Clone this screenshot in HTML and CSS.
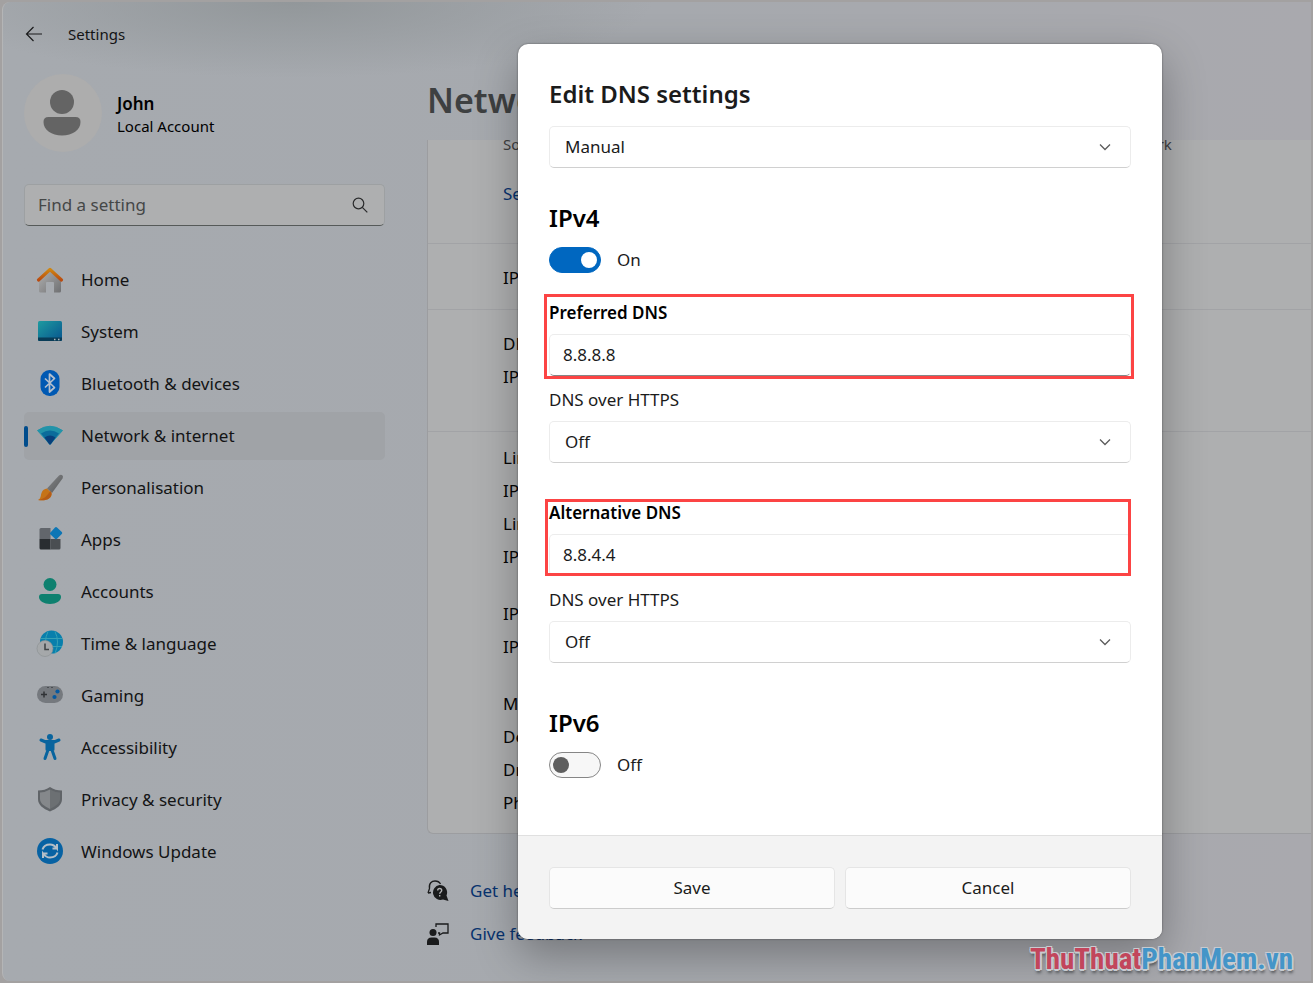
FILE: index.html
```html
<!DOCTYPE html>
<html lang="en">
<head>
  <meta charset="UTF-8">
  <meta name="viewport" content="width=device-width, initial-scale=1.0">
  <title>Settings</title>
  <link rel="stylesheet" href="styles.css">
</head>
<body>
  <div class="window">
    <header class="titlebar">
      <button class="back-button" aria-label="Back">
        <svg width="18" height="16" viewBox="0 0 18 16" fill="none" stroke="#1a1b1c" stroke-width="1.2"><path d="M17 8H1.5M8.500 1L1.500 8l7 7"/></svg>
      </button>
      <span class="app-name">Settings</span>
    </header>
    <div class="columns">
      <aside class="sidebar">
        <div class="account">
          <div class="avatar">
            <svg width="78" height="78" viewBox="0 0 78 78" fill="#646464"><circle cx="38" cy="28" r="12"/><path d="M24.500 43h27q5 0 5 5c0 8-8 13.500-18.500 13.500S19.500 56 19.500 48q0-5 5-5z"/></svg>
          </div>
          <div>
            <div class="account-name">John</div>
            <div class="account-type">Local Account</div>
          </div>
        </div>
        <label class="search">
          <input type="text" placeholder="Find a setting" aria-label="Find a setting">
          <svg width="16" height="16" viewBox="0 0 16 16" fill="none" stroke="#2a2b2c" stroke-width="1.200"><circle cx="6.500" cy="6.500" r="5.300"/><path d="M10.300 10.300l5 5"/></svg>
        </label>
        <nav class="menu">
          <a class="menu-item" href="#home">
            <svg viewBox="0 0 28 28"><defs><linearGradient id="wall" x2="1" y2="1"><stop stop-color="#b2b2b2"/><stop offset="1" stop-color="#6f7072"/></linearGradient><linearGradient id="roof" x2="0" y2="1"><stop stop-color="#cf8512"/><stop offset="1" stop-color="#b94b10"/></linearGradient></defs><path d="M3 12L14 3l11 9v13q0 1.500-1.500 1.500H18V17q0-1-1-1h-6q-1 0-1 1v9.500H4.500Q3 26.500 3 25z" fill="url(#wall)"/><path d="M2.500 14L14 3.500 25.500 14" fill="none" stroke="url(#roof)" stroke-width="3.200" stroke-linecap="round" stroke-linejoin="round"/></svg>
            Home
          </a>
          <a class="menu-item" href="#system">
            <svg viewBox="0 0 28 28"><defs><linearGradient id="screen" x2="1" y2="1"><stop stop-color="#1e9ba0"/><stop offset="1" stop-color="#07548e"/></linearGradient></defs><rect x="2" y="3" width="24" height="20" rx="1.500" fill="url(#screen)"/><path d="M2 19.500h24v2q0 1.500-1.500 1.500h-21Q2 23 2 21.500z" fill="#083c57"/><path d="M18 21.500h1.500m2.500 0h1.500" stroke="#b0b8bd" stroke-width="1.300"/></svg>
            System
          </a>
          <a class="menu-item" href="#bluetooth">
            <svg viewBox="0 0 28 28"><rect x="4.500" y="0" width="19" height="26" rx="9" fill="#0059b3"/><path d="M9 8.500l9.500 9-5 4.500V4l5 4.500-9.500 9" fill="none" stroke="#b5bfcc" stroke-width="1.700" stroke-linejoin="round"/></svg>
            Bluetooth &amp; devices
          </a>
          <a class="menu-item active" href="#network" aria-current="page">
            <svg viewBox="0 0 28 28"><path d="M1.500 8.500Q14 0 26.500 8.500L14 22.500z" fill="#2293a9" stroke="#2293a9" stroke-linejoin="round"/><path d="M5 11.500Q14 5.500 23 11.500L14 22.500z" fill="#0b6c9b"/><path d="M8.500 15.500Q14 11.500 19.500 15.500L15 22q-1 1-2 0z" fill="#083f7b"/></svg>
            Network &amp; internet
          </a>
          <a class="menu-item" href="#personalisation">
            <svg viewBox="0 0 28 28"><defs><linearGradient id="brush" x2="1" y2="1"><stop stop-color="#858789"/><stop offset="1" stop-color="#56585a"/></linearGradient></defs><path d="M23 1.500q2-1.500 3.500 0 1 1 0 3L16 19l-5-4.500z" fill="url(#brush)"/><path d="M11 14.500l4.500 4.500c1 5-5 8.500-13.500 7 3-1.500 2.500-4 3.500-7s3-4 5.500-4.500z" fill="#c57318"/><path d="M2 26c6-1 8-3 12.500-9l1 2c.5 5-5 8.500-13.500 7z" fill="#b55c16"/></svg>
            Personalisation
          </a>
          <a class="menu-item" href="#apps">
            <svg viewBox="0 0 28 28"><path d="M5 2h9.500v11H3.500V3.500Q3.500 2 5 2z" fill="#62666c"/><path d="M3.500 13h11v10.500H5q-1.500 0-1.500-1.500z" fill="#292d31"/><path d="M14.500 13h10v9q0 1.500-1.500 1.500h-8.500z" fill="#4a4e52"/><path d="M14 7l5-5.500q1-1 2 0L25.800 6q1 1 0 2L21 12.800q-1 1-2 0L14 8z" fill="#0d76b5"/></svg>
            Apps
          </a>
          <a class="menu-item" href="#accounts">
            <svg viewBox="0 0 28 28" fill="#0e806f"><circle cx="14" cy="6.500" r="6.500"/><path d="M6 16h16q3 0 3 3c0 4-5 7-11 7s-11-3-11-7q0-3 3-3z"/></svg>
            Accounts
          </a>
          <a class="menu-item" href="#time">
            <svg viewBox="0 0 28 28"><circle cx="15.500" cy="12" r="11.500" fill="#087fac"/><path d="M5 8.500h21M5 16.500h21M12 1.500q-5 10 0 22M19 1.500q5 10 0 22" fill="none" stroke="#35a0b5"/><circle cx="9" cy="18.500" r="8" fill="#a5a8aa" stroke="#8a8e91" stroke-width=".6"/><path d="M9 13.500v6h4" fill="none" stroke="#424649" stroke-width="1.600"/></svg>
            Time &amp; language
          </a>
          <a class="menu-item" href="#gaming">
            <svg viewBox="0 0 28 28"><rect x="1" y="4" width="26" height="17" rx="8.500" fill="#75797e"/><path d="M5 12.500h6M8 9.500v6" stroke="#303336" stroke-width="1.500"/><path d="M11 5.500h2m2 0h2" stroke="#4a4e52"/><circle cx="21.500" cy="9.500" r="2.100" fill="#0659a0"/><circle cx="18.500" cy="15" r="2.100" fill="#0659a0"/></svg>
            Gaming
          </a>
          <a class="menu-item" href="#accessibility">
            <svg viewBox="0 0 28 28"><circle cx="14" cy="3" r="3" fill="#08649e"/><path d="M5 6l6 2.500h6L23 6M11 9.500h6v6H11zM12.500 14.500L9 24.500M15.500 14.500L19 24.500" fill="#08649e" stroke="#08649e" stroke-width="3" stroke-linecap="round" stroke-linejoin="round"/></svg>
            Accessibility
          </a>
          <a class="menu-item" href="#privacy">
            <svg viewBox="0 0 28 28"><path d="M14 1q5 3.500 12 3.500V13c0 6-5 9.500-12 12.500C7 22.500 2 19 2 13V4.500Q9 4.500 14 1z" fill="#606468"/><path d="M14 3.500q4 2.500 10 3V13c0 4-4 7-10 10z" fill="#6c7073"/><path d="M14 3.500V23C8 20 4 17 4 13V6.500q6-.5 10-3z" fill="#85888b"/></svg>
            Privacy &amp; security
          </a>
          <a class="menu-item" href="#update">
            <svg viewBox="0 0 28 28"><circle cx="14" cy="13" r="13" fill="#0762a3"/><path d="M6.500 11.500Q8 6.500 14 6.500q4 0 7 4V6m0 4.500h-4.500M21.500 14.500Q20 19.500 14 19.500q-4 0-7-4V20m0-4.500h4.500" fill="none" stroke="#b3bec7" stroke-width="2"/></svg>
            Windows Update
          </a>
        </nav>
      </aside>
      <main class="content">
        <h1>Network</h1>
        <div class="panel">
          <section class="metered">
            <p>Some apps might work differently to reduce data usage when you're connected to this network</p>
            <a href="#limit">Set a data limit</a>
          </section>
          <section class="assignment">
            <div class="row">IP assignment:</div>
          </section>
          <section class="servers">
            <div class="row">DNS servers:</div>
            <div class="row">IPv4 DNS servers:</div>
          </section>
          <section class="details">
            <div>
              <div class="row">Link speed:</div>
              <div class="row">IPv6 address:</div>
              <div class="row">Link-local address:</div>
              <div class="row">IPv6 DNS servers:</div>
            </div>
            <div>
              <div class="row">IPv4 address:</div>
              <div class="row">IPv4 DNS servers:</div>
            </div>
            <div>
              <div class="row">Manufacturer:</div>
              <div class="row">Description:</div>
              <div class="row">Driver version:</div>
              <div class="row">Physical address:</div>
            </div>
          </section>
        </div>
        <div class="help">
          <a href="#help">
            <svg width="22" height="22" viewBox="0 0 22 22"><path d="M1 13l1.500-4.500C1.500 3 5 1 8 1c2.500 0 4.500 1 5.500 3M1 13l3-.5" fill="none" stroke="#1a1b1c" stroke-width="1.300"/><path d="M12.500 5a7.500 7.500 0 0 1 7 10.500L21.500 21 16 19.500A7.500 7.500 0 1 1 12.500 5z" fill="#1a1b1c"/><path d="M10.700 10.500q0-2 2-2t2 2c0 1.500-2 1.500-2 3.300m0 1.200v1.500" fill="none" stroke="#b0b1b2" stroke-width="1.400"/></svg>
            Get help
          </a>
          <a href="#feedback">
            <svg width="22" height="22" viewBox="0 0 22 22"><circle cx="6" cy="9.500" r="3.500" fill="#1a1b1c"/><path d="M0 22v-3q0-4.500 4.500-4.500h3q4.500 0 4.500 4.500v3z" fill="#1a1b1c"/><path d="M9 4V1h12v9h-5l-3.500 2V10H11" fill="none" stroke="#1a1b1c" stroke-width="1.300"/></svg>
            Give feedback
          </a>
        </div>
      </main>
    </div>
  </div>

  <div class="overlay">
    <form class="dialog" role="dialog" aria-labelledby="dialog-title">
      <div class="dialog-body">
        <h2 id="dialog-title">Edit DNS settings</h2>
        <div class="select">
          <select aria-label="DNS mode"><option>Manual</option><option>Automatic (DHCP)</option></select>
          <svg width="12" height="8" viewBox="0 0 12 8" fill="none" stroke="#5c5c5c" stroke-width="1.300"><path d="M1 1.500l5 5 5-5"/></svg>
        </div>

        <h3>IPv4</h3>
        <label class="toggle"><input type="checkbox" checked> On</label>
        <div class="fields">
          <div class="field highlight">
            <label for="preferred">Preferred DNS</label>
            <input id="preferred" type="text" value="8.8.8.8">
          </div>
          <div class="field">
            <label for="https1">DNS over HTTPS</label>
            <div class="select">
              <select id="https1"><option>Off</option><option>On</option></select>
              <svg width="12" height="8" viewBox="0 0 12 8" fill="none" stroke="#5c5c5c" stroke-width="1.300"><path d="M1 1.500l5 5 5-5"/></svg>
            </div>
          </div>
        </div>
        <div class="fields">
          <div class="field highlight tight">
            <label for="alternative">Alternative DNS</label>
            <input id="alternative" type="text" value="8.8.4.4">
          </div>
          <div class="field">
            <label for="https2">DNS over HTTPS</label>
            <div class="select">
              <select id="https2"><option>Off</option><option>On</option></select>
              <svg width="12" height="8" viewBox="0 0 12 8" fill="none" stroke="#5c5c5c" stroke-width="1.300"><path d="M1 1.500l5 5 5-5"/></svg>
            </div>
          </div>
        </div>

        <h3 class="ipv6">IPv6</h3>
        <label class="toggle"><input type="checkbox"> Off</label>
      </div>
      <div class="dialog-footer">
        <button type="button">Save</button>
        <button type="button">Cancel</button>
      </div>
    </form>
  </div>
  <div class="watermark"><span>ThuThuat</span>PhanMem.vn</div>
</body>
</html>
```
FILE: styles.css
```css
* {
  box-sizing: border-box;
}
body {
  margin: 0;
  min-height: 100vh;
  padding: 2px;
  background: #a3a1a1;
  color: #131415;
  font-family: "Noto Sans", "Open Sans", sans-serif;
  font-size: 17px;
  line-height: 24px;
  position: relative;
  display: flex;
}
h1, h2, h3, p {
  margin: 0;
  font-weight: 600;
}
a {
  color: inherit;
  text-decoration: none;
}
button, input, select {
  font: inherit;
  color: inherit;
}
.window {
  flex: 1;
  min-width: 0;
  border-left: 1px solid #b4b5b6;
  border-radius: 8px 0 0 8px;
  background:
    radial-gradient(ellipse 360px 76px at 290px 0, #92979a 0%, rgba(166, 170, 175, 0) 100%),
    linear-gradient(to right, #a6aaaf, #a6a9ae 50%, #a9a9ae);
}
.titlebar {
  display: flex;
  align-items: center;
  gap: 25px;
  height: 64px;
  padding-left: 22px;
}
.back-button {
  display: flex;
  padding: 0;
  border: none;
  background: none;
}
.app-name {
  font-size: 15px;
}
.columns {
  display: flex;
  gap: 42px;
}
.sidebar {
  width: 382px;
  flex: none;
  padding: 8px 0 0 21px;
}
.account {
  display: flex;
  align-items: center;
  gap: 15px;
  color: #000;
}
.avatar {
  width: 78px;
  height: 78px;
  border-radius: 50%;
  background: #adadad;
}
.account-name {
  padding-top: 2px;
  font-weight: 600;
}
.account-type {
  font-size: 15px;
  line-height: 20px;
}
.search {
  display: flex;
  align-items: center;
  height: 42px;
  margin-top: 32px;
  padding: 0 16px 0 13px;
  background: #aeafb0;
  border: 1px solid #9da0a2;
  border-bottom-color: #565a59;
  border-radius: 5px;
}
.search input {
  flex: 1;
  min-width: 0;
  padding: 0;
  border: none;
  outline: none;
  background: none;
}
.search input::placeholder {
  color: #454747;
  opacity: 1;
}
.menu {
  display: flex;
  flex-direction: column;
  gap: 4px;
  margin-top: 30px;
}
.menu-item {
  display: flex;
  align-items: center;
  gap: 17px;
  height: 48px;
  padding-left: 12px;
  border-radius: 5px;
  position: relative;
}
.menu-item svg {
  width: 28px;
  height: 28px;
}
.menu-item.active {
  background: #a0a3a7;
}
.menu-item.active::before {
  content: "";
  position: absolute;
  left: 0;
  width: 4px;
  height: 21px;
  border-radius: 2px;
  background: #004c8c;
}
.content {
  flex: 1;
  min-width: 0;
  white-space: nowrap;
  overflow: hidden;
}
h1 {
  margin: 10px 0 16px;
  font-size: 34px;
  line-height: 48px;
  color: #3e4041;
}
.panel {
  overflow: hidden;
  background: #aeafb0;
  border: 1px solid #9c9da0;
  border-width: 0 0 1px 1px;
  border-radius: 0 0 0 6px;
  color: #050505;
}
.panel section {
  padding-left: 75px;
}
.panel section + section {
  border-top: 1px solid #a2a3a6;
}
.metered {
  padding-bottom: 37px;
}
.metered p {
  margin: -6px 0 28px;
  font-size: 15px;
  font-weight: 400;
  line-height: 20px;
  color: #3e4041;
}
.metered a {
  display: block;
  color: #08336f;
}
.row {
  line-height: 33px;
}
.panel .assignment {
  padding-top: 17px;
  padding-bottom: 15px;
}
.panel .servers {
  padding-top: 17px;
  padding-bottom: 38px;
}
.panel .details {
  display: grid;
  gap: 24px;
  padding-top: 9px;
  padding-bottom: 14px;
}
.help {
  margin-top: 35px;
  color: #08336f;
}
.help a {
  display: flex;
  align-items: center;
  gap: 21px;
  height: 43px;
}

/* modal */
.overlay {
  position: absolute;
  inset: 0;
  padding: 44px 151px 44px 518px;
}
.dialog {
  overflow: hidden;
  border-radius: 10px;
  background: #fff;
  color: #1b1b1b;
  box-shadow: 0 0 2px rgba(0, 0, 0, 0.5), 0 16px 44px rgba(0, 0, 0, 0.3);
}
.dialog-body {
  padding: 34px 31px 57px;
}
h2 {
  margin-bottom: 16px;
  font-size: 24px;
  line-height: 32px;
}
h3 {
  margin: 35px 0 14px;
  font-size: 24px;
  line-height: 30px;
  color: #000;
}
.ipv6 {
  margin-top: 45px;
}
.select {
  display: flex;
  align-items: center;
  position: relative;
}
.select select {
  appearance: none;
  width: 100%;
  height: 42px;
  padding: 0 15px;
  background: #fff;
  border: 1px solid #ececec;
  border-bottom-color: #d0d0d0;
  border-radius: 5px;
}
.select svg {
  position: absolute;
  right: 20px;
  pointer-events: none;
}
.toggle {
  display: flex;
  align-items: center;
  gap: 16px;
  height: 26px;
}
.toggle input {
  appearance: none;
  width: 52px;
  height: 26px;
  margin: 0;
  padding: 4px 3px;
  border: 1px solid #868686;
  border-radius: 13px;
  background: #f7f7f7;
}
.toggle input::before {
  content: "";
  display: block;
  width: 16px;
  height: 16px;
  border-radius: 50%;
  background: #5f5f5f;
}
.toggle input:checked {
  border-color: #0067c0;
  background: #0067c0;
}
.toggle input:checked::before {
  margin-left: auto;
  background: #fff;
}
.fields {
  display: grid;
  gap: 12px;
  margin-top: 28px;
}
.fields + .fields {
  margin-top: 38px;
}
.field {
  display: grid;
  gap: 9px;
  position: relative;
}
.field input {
  width: 100%;
  min-width: 0;
  height: 42px;
  padding: 0 13px 2px;
  border: 1px solid #ececec;
  border-bottom-color: #868686;
  border-radius: 5px;
}
.highlight label {
  font-weight: 600;
  color: #000;
}
.highlight::after {
  content: "";
  position: absolute;
  inset: -7px -3px -3px -5px;
  border: 3px solid #fc4444;
  pointer-events: none;
}
.highlight.tight::after {
  inset: -2px 0 0 -4px;
}
.dialog-footer {
  display: grid;
  grid-template-columns: 1fr 1fr;
  gap: 10px;
  padding: 31px 31px 30px;
  background: #f3f3f3;
  border-top: 1px solid #e0e0e0;
}
.dialog-footer button {
  height: 42px;
  background: #fbfbfb;
  border: 1px solid #e5e5e5;
  border-bottom-color: #ccc;
  border-radius: 5px;
}

.watermark {
  position: absolute;
  right: 20px;
  bottom: 6px;
  font-family: "Roboto Condensed", "Liberation Sans", sans-serif;
  font-size: 29px;
  font-weight: bold;
  line-height: 36px;
  color: #4495c8;
  text-shadow: -1px -1px #c8cbd0, 1px -1px #c8cbd0, -1px 1px #c8cbd0, 2px 1px #c8cbd0, 0 2px #c8cbd0, 1px 4px 3px #55585c;
}
.watermark span {
  color: #c2465c;
}
```
